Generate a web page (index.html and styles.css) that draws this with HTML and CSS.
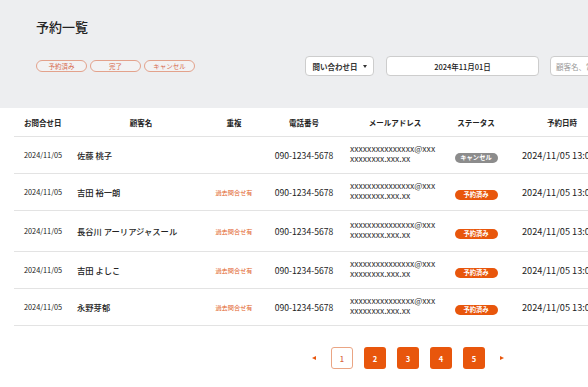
FILE: index.html
```html
<!DOCTYPE html>
<html lang="ja">
<head>
<meta charset="utf-8">
<title>予約一覧</title>
<link rel="stylesheet" href="styles.css">
</head>
<body>
<div class="page">
  <header class="top">
    <h1 class="title">予約一覧</h1>
    <div class="filters">
      <div class="chips">
        <span class="chip">予約済み</span>
        <span class="chip">完了</span>
        <span class="chip">キャンセル</span>
      </div>
      <div class="controls">
        <div class="select">問い合わせ日<span class="caret"></span></div>
        <div class="date">2024年11月01日</div>
        <div class="search">顧客名、電話番号、メールアドレス</div>
      </div>
    </div>
  </header>
  <table class="list">
    <colgroup>
      <col class="c1"><col class="c2"><col class="c3"><col class="c4"><col class="c5"><col class="c6"><col class="c7">
    </colgroup>
    <thead>
      <tr><th>お問合せ日</th><th>顧客名</th><th>重複</th><th>電話番号</th><th>メールアドレス</th><th>ステータス</th><th>予約日時</th></tr>
    </thead>
    <tbody>
      <tr>
        <td class="d">2024/11/05</td><td class="name">佐藤 桃子</td><td></td><td class="tel">090-1234-5678</td>
        <td><div class="mail">xxxxxxxxxxxxxxx@xxx<br>xxxxxxxx.xxx.xx</div></td>
        <td><span class="badge gray">キャンセル</span></td><td class="dt">2024/11/05 13:00</td>
      </tr>
      <tr>
        <td class="d">2024/11/05</td><td class="name">吉田 裕一朗</td><td class="dup">過去問合せ有</td><td class="tel">090-1234-5678</td>
        <td><div class="mail">xxxxxxxxxxxxxxx@xxx<br>xxxxxxxx.xxx.xx</div></td>
        <td><span class="badge">予約済み</span></td><td class="dt">2024/11/05 13:00</td>
      </tr>
      <tr class="tall">
        <td class="d">2024/11/05</td><td class="name">長谷川 アーリアジャスール</td><td class="dup">過去問合せ有</td><td class="tel">090-1234-5678</td>
        <td><div class="mail">xxxxxxxxxxxxxxx@xxx<br>xxxxxxxx.xxx.xx</div></td>
        <td><span class="badge">予約済み</span></td><td class="dt">2024/11/05 13:00</td>
      </tr>
      <tr>
        <td class="d">2024/11/05</td><td class="name">吉田 よしこ</td><td class="dup">過去問合せ有</td><td class="tel">090-1234-5678</td>
        <td><div class="mail">xxxxxxxxxxxxxxx@xxx<br>xxxxxxxx.xxx.xx</div></td>
        <td><span class="badge">予約済み</span></td><td class="dt">2024/11/05 13:00</td>
      </tr>
      <tr>
        <td class="d">2024/11/05</td><td class="name">永野芽郁</td><td class="dup">過去問合せ有</td><td class="tel">090-1234-5678</td>
        <td><div class="mail">xxxxxxxxxxxxxxx@xxx<br>xxxxxxxx.xxx.xx</div></td>
        <td><span class="badge">予約済み</span></td><td class="dt">2024/11/05 13:00</td>
      </tr>
    </tbody>
  </table>
  <nav class="pager">
    <span class="arrow left"></span>
    <span class="pg current">1</span>
    <span class="pg">2</span>
    <span class="pg">3</span>
    <span class="pg">4</span>
    <span class="pg">5</span>
    <span class="arrow right"></span>
  </nav>
</div>
</body>
</html>
```

FILE: styles.css
```css
html, body {
  margin: 0;
  padding: 0;
  background: #ffffff;
  overflow: hidden;
}
body {
  font-family: "Noto Sans CJK JP", "Noto Sans", sans-serif;
  color: #222222;
}
.page {
  width: 820px;
}
.top {
  background: #edeef0;
  height: 108px;
  box-sizing: border-box;
  padding: 17px 0 0 36px;
}
.title {
  margin: 0;
  font-size: 13px;
  line-height: 20px;
  font-weight: 500;
  color: #222222;
}
.filters {
  display: flex;
  align-items: center;
  margin-top: 19px;
  height: 20px;
}
.chips {
  display: flex;
  gap: 3px;
}
.chip {
  width: 51px;
  height: 12px;
  box-sizing: border-box;
  border: 1px solid #e3a28c;
  border-radius: 6px;
  font-size: 6.5px;
  line-height: 10px;
  text-align: center;
  color: #d6684c;
  background: #f2f2f3;
}
.controls {
  display: flex;
  align-items: center;
  margin-left: 110px;
}
.select, .date, .search {
  height: 20px;
  box-sizing: border-box;
  border: 1px solid #cdcdcd;
  border-radius: 4px;
  background: #ffffff;
  display: flex;
  align-items: center;
  font-size: 7.5px;
}
.select {
  width: 69px;
  justify-content: center;
  font-weight: 700;
  color: #333333;
  gap: 5px;
}
.caret {
  width: 0;
  height: 0;
  border-left: 2px solid transparent;
  border-right: 2px solid transparent;
  border-top: 3px solid #333333;
}
.date {
  width: 153px;
  margin-left: 12px;
  justify-content: center;
  font-weight: 500;
  color: #222222;
}
.search {
  width: 120px;
  margin-left: 11px;
  padding-left: 5px;
  color: #999999;
  white-space: nowrap;
  overflow: hidden;
}
.list {
  margin-left: 14px;
  border-collapse: collapse;
  table-layout: fixed;
  width: 598px;
}
.c1 { width: 58px; }
.c2 { width: 138px; }
.c3 { width: 48px; }
.c4 { width: 92px; }
.c5 { width: 90px; }
.c6 { width: 72px; }
.c7 { width: 100px; }
.list th {
  height: 28px;
  font-size: 7.5px;
  font-weight: 700;
  color: #222222;
  text-align: center;
  padding: 0;
  border-bottom: 1px solid #e3e3e3;
}
.list th:first-child {
  text-align: left;
  padding-left: 10px;
}
.list td {
  height: 36px;
  padding: 0;
  text-align: center;
  border-bottom: 1px solid #e3e3e3;
  white-space: nowrap;
}
.list tr.tall td {
  height: 40px;
}
.list td.d {
  font-size: 7.3px;
  text-align: left;
  padding-left: 10px;
  color: #222222;
}
.list td.name {
  text-align: left;
  padding-left: 5px;
  font-size: 8.3px;
  font-weight: 500;
  color: #222222;
}
.list td.dup {
  font-size: 6.2px;
  color: #e2642a;
}
.list td.tel {
  font-size: 8.6px;
  color: #222222;
}
.mail {
  display: inline-block;
  text-align: left;
  font-size: 8.6px;
  line-height: 10.5px;
  color: #333333;
  margin-right: 6px;
}
.badge {
  display: inline-block;
  width: 43px;
  height: 10px;
  border-radius: 5px;
  background: #e8560c;
  color: #ffffff;
  font-size: 6.3px;
  line-height: 10px;
  font-weight: 700;
  text-align: center;
  vertical-align: middle;
}
.badge.gray {
  background: #8c8c8c;
}
.list td.dt {
  font-size: 9.2px;
  text-align: left;
  padding-left: 10px;
  color: #222222;
}
.pager {
  width: 816px;
  display: flex;
  justify-content: center;
  align-items: center;
  margin-top: 21px;
  gap: 11px;
}
.pg {
  width: 22px;
  height: 22px;
  box-sizing: border-box;
  border-radius: 3px;
  background: #e8560c;
  color: #ffffff;
  font-size: 7.5px;
  font-weight: 700;
  display: flex;
  align-items: center;
  justify-content: center;
}
.pg.current {
  background: #ffffff;
  border: 1px solid #eaa584;
  color: #d8683e;
  font-weight: 500;
}
.arrow {
  width: 0;
  height: 0;
  border-top: 2.5px solid transparent;
  border-bottom: 2.5px solid transparent;
}
.arrow.left {
  border-right: 4px solid #e8560c;
  margin-right: 4px;
}
.arrow.right {
  border-left: 4px solid #e8560c;
  margin-left: 4px;
}
```
